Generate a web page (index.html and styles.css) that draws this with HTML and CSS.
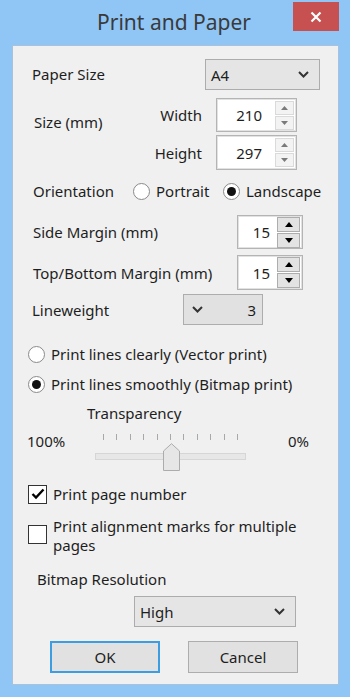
FILE: index.html
```html
<!DOCTYPE html>
<html>
<head>
<meta charset="utf-8">
<link rel="stylesheet" href="styles.css">
</head>
<body>
<div class="window">
  <div class="titlebar">
    <div class="title">Print and Paper</div>
    <div class="close">
      <svg width="12" height="12" viewBox="0 0 12 12"><path d="M1.5 1.5 L10.5 10.5 M10.5 1.5 L1.5 10.5" stroke="#fff" stroke-width="2.2" fill="none"/></svg>
    </div>
  </div>
  <div class="panel">
    <div class="row row-paper">
      <span class="label lbl-paper">Paper Size</span>
      <div class="combo combo-paper">
        <span>A4</span>
        <svg class="chev" width="11" height="7" viewBox="0 0 11 7"><path d="M1 1 L5.5 5.5 L10 1" stroke="#333" stroke-width="2" fill="none"/></svg>
      </div>
    </div>

    <div class="size-grid">
      <span class="label size-label">Size (mm)</span>
      <span class="sublabel">Width</span>
      <div class="spin spin-dim">
        <span class="num">210</span>
        <div class="btns">
          <div class="btn"><svg width="7" height="4" viewBox="0 0 7 4"><path d="M0 4 L3.5 0 L7 4Z" fill="#7a7a7a"/></svg></div>
          <div class="btn"><svg width="7" height="4" viewBox="0 0 7 4"><path d="M0 0 L3.5 4 L7 0Z" fill="#7a7a7a"/></svg></div>
        </div>
      </div>
      <span class="sublabel">Height</span>
      <div class="spin spin-dim spin-h">
        <span class="num">297</span>
        <div class="btns">
          <div class="btn"><svg width="7" height="4" viewBox="0 0 7 4"><path d="M0 4 L3.5 0 L7 4Z" fill="#7a7a7a"/></svg></div>
          <div class="btn"><svg width="7" height="4" viewBox="0 0 7 4"><path d="M0 0 L3.5 4 L7 0Z" fill="#7a7a7a"/></svg></div>
        </div>
      </div>
    </div>

    <div class="row row-orient">
      <span class="label lbl-orient">Orientation</span>
      <span class="radio"></span><span class="rtext rt-portrait">Portrait</span>
      <span class="radio checked"></span><span class="rtext">Landscape</span>
    </div>

    <div class="row row-margin">
      <span class="label lbl-margin">Side Margin (mm)</span>
      <div class="spin spin-m">
        <span class="num">15</span>
        <div class="btns">
          <div class="btn"><svg width="8" height="5" viewBox="0 0 8 5"><path d="M0 5 L4 0 L8 5Z" fill="#000"/></svg></div>
          <div class="btn"><svg width="8" height="5" viewBox="0 0 8 5"><path d="M0 0 L4 5 L8 0Z" fill="#000"/></svg></div>
        </div>
      </div>
    </div>

    <div class="row row-margin2">
      <span class="label lbl-margin">Top/Bottom Margin (mm)</span>
      <div class="spin spin-m">
        <span class="num">15</span>
        <div class="btns">
          <div class="btn"><svg width="8" height="5" viewBox="0 0 8 5"><path d="M0 5 L4 0 L8 5Z" fill="#000"/></svg></div>
          <div class="btn"><svg width="8" height="5" viewBox="0 0 8 5"><path d="M0 0 L4 5 L8 0Z" fill="#000"/></svg></div>
        </div>
      </div>
    </div>

    <div class="row row-line">
      <span class="label lbl-line">Lineweight</span>
      <div class="lw-box">
        <svg class="chev" width="11" height="7" viewBox="0 0 11 7"><path d="M1 1 L5.5 5.5 L10 1" stroke="#333" stroke-width="2" fill="none"/></svg>
        <span>3</span>
      </div>
    </div>

    <div class="row row-r1">
      <span class="radio"></span><span class="rtext">Print lines clearly (Vector print)</span>
    </div>
    <div class="row row-r2">
      <span class="radio checked"></span><span class="rtext">Print lines smoothly (Bitmap print)</span>
    </div>

    <div class="row row-transp"><span class="label">Transparency</span></div>

    <div class="row row-slider">
      <span class="pct pct-l">100%</span>
      <div class="slider">
        <div class="ticks">
          <i></i><i></i><i></i><i></i><i></i><i></i><i></i><i></i><i></i><i></i><i></i>
        </div>
        <div class="track"></div>
        <svg class="thumb" width="17" height="28" viewBox="0 0 17 28"><path d="M0.5 27.5 L0.5 8 L8.5 0.7 L16.5 8 L16.5 27.5 Z" fill="#e6e6e6" stroke="#acacac" stroke-width="1"/></svg>
      </div>
      <span class="pct pct-r">0%</span>
    </div>

    <div class="row row-c1">
      <span class="check checked">
        <svg width="14" height="12" viewBox="0 0 14 12"><path d="M1.5 6 L5 9.5 L12.5 1.5" stroke="#000" stroke-width="2.4" fill="none"/></svg>
      </span>
      <span class="rtext">Print page number</span>
    </div>

    <div class="row row-c2">
      <span class="check"></span>
      <span class="rtext ctext2">Print alignment marks for multiple pages</span>
    </div>

    <div class="row row-bitmap"><span class="label">Bitmap Resolution</span></div>

    <div class="row row-high">
      <div class="combo combo-high">
        <span>High</span>
        <svg class="chev" width="11" height="7" viewBox="0 0 11 7"><path d="M1 1 L5.5 5.5 L10 1" stroke="#333" stroke-width="2" fill="none"/></svg>
      </div>
    </div>

    <div class="row row-buttons">
      <div class="button default">OK</div>
      <div class="button">Cancel</div>
    </div>
  </div>
</div>
</body>
</html>
```
FILE: styles.css
```css
* { box-sizing: border-box; }
html, body { margin: 0; padding: 0; }
body {
  width: 350px;
  height: 697px;
  overflow: hidden;
  font-family: "Noto Sans", "Open Sans", sans-serif;
  font-size: 15px;
  color: #1e1e1e;
}
.window {
  width: 350px;
  height: 697px;
  background: #90c6f6;
  display: flex;
  flex-direction: column;
}
.titlebar {
  height: 45px;
  position: relative;
  display: flex;
  justify-content: center;
}
.title {
  font-size: 21px;
  color: #3a3a3a;
  line-height: 24px;
  padding-top: 10px;
  margin-left: -2px;
}
.close {
  position: absolute;
  left: 293px;
  top: 2px;
  width: 46px;
  height: 29px;
  background: #c75050;
  display: flex;
  align-items: center;
  justify-content: center;
}
.panel {
  margin-left: 12px;
  width: 327px;
  height: 640px;
  background: #f0f0f0;
  border: 1px solid #a9c2da;
  padding-top: 13px;
}
.row {
  display: flex;
  align-items: center;
}
.label { line-height: 18px; white-space: nowrap; }

.row-paper { height: 31px; padding-left: 19px; }
.lbl-paper { width: 173px; margin-top: -2px; }
.combo {
  height: 31px;
  background: #e5e5e5;
  border: 1px solid #acacac;
  display: flex;
  align-items: center;
  justify-content: space-between;
  padding: 0 10px 0 5px;
}
.combo-paper { width: 115px; }
.combo .chev, .lw-box .chev { display: block; }

.size-grid {
  margin-top: 8px;
  padding-left: 21px;
  display: grid;
  grid-template-columns: 116px 66px 81px;
  grid-template-rows: 34px 35px;
  row-gap: 3px;
  align-items: center;
}
.size-label { grid-row: 1 / span 2; align-self: start; padding-top: 15px; }
.sublabel { text-align: right; padding-right: 14px; line-height: 18px; }
.spin {
  height: 34px;
  width: 81px;
  background: #fff;
  border: 1px solid #b4b4b4;
  box-shadow: inset 0 0 0 1px #e2e2e2;
  display: flex;
  align-items: center;
  justify-content: flex-end;
  padding-right: 2px;
}
.spin-h { height: 35px; }
.num { margin-right: 13px; font-size: 15px; }
.btns { display: flex; flex-direction: column; gap: 1px; }
.btn {
  width: 19px;
  height: 14px;
  background: #f3f3f3;
  border: 1px solid #dadada;
  display: flex;
  align-items: center;
  justify-content: center;
}
.spin-m { width: 66px; height: 34px; padding-right: 2px; }
.spin-m .num { margin-right: 7px; }
.spin-m .btn { width: 23px; height: 15px; background: #e3e3e3; border: 1px solid #adadad; }

.row-orient { margin-top: 11px; height: 20px; padding-left: 20px; }
.lbl-orient { width: 100px; }
.radio {
  width: 17px;
  height: 17px;
  border-radius: 50%;
  background: #fff;
  border: 1px solid #8a8a8a;
  display: flex;
  align-items: center;
  justify-content: center;
  flex: none;
}
.radio.checked::after {
  content: "";
  width: 9px;
  height: 9px;
  border-radius: 50%;
  background: #111;
}
.rtext { margin-left: 6px; line-height: 18px; white-space: nowrap; }
.rt-portrait { width: 67px; }

.row-margin { margin-top: 14px; height: 34px; padding-left: 20px; }
.row-margin2 { margin-top: 6px; height: 35px; padding-left: 20px; }
.row-margin2 .spin-m { height: 35px; }
.lbl-margin { width: 204px; }

.row-line { margin-top: 4px; height: 31px; padding-left: 19px; }
.lbl-line { width: 151px; }
.lw-box {
  width: 80px;
  height: 31px;
  background: #e1e1e1;
  border: 1px solid #adadad;
  display: flex;
  align-items: center;
  justify-content: space-between;
  padding: 0 6px 0 8px;
}

.row-r1 { margin-top: 20px; height: 18px; padding-left: 15px; }
.row-r2 { margin-top: 12px; height: 18px; padding-left: 15px; }

.row-transp { margin-top: 11px; height: 18px; padding-left: 74px; }

.row-slider { margin-top: 8px; height: 42px; padding-left: 14px; align-items: flex-start; }
.pct { line-height: 18px; margin-top: 2px; }
.pct-l { width: 68px; }
.pct-r { margin-left: 42px; }
.slider { width: 151px; height: 42px; position: relative; }
.ticks {
  margin-top: 4px;
  margin-left: 8px;
  width: 135px;
  height: 6px;
  display: flex;
  justify-content: space-between;
}
.ticks i { display: block; width: 1px; height: 6px; background: #a8a8a8; }
.track {
  margin-top: 13px;
  height: 7px;
  background: #e7e7e7;
  border: 1px solid #d6d6d6;
}
.thumb { position: absolute; left: 68px; top: 13px; }

.row-c1 { margin-top: 13px; height: 18px; padding-left: 15px; }
.check {
  width: 19px;
  height: 19px;
  background: #fff;
  border: 1px solid #333;
  display: flex;
  align-items: center;
  justify-content: center;
  flex: none;
}
.row-c2 { margin-top: 14px; padding-left: 15px; align-items: flex-start; }
.row-c2 .check { margin-top: 8px; }
.ctext2 { white-space: normal; width: 250px; line-height: 19px; }

.row-bitmap { margin-top: 15px; height: 18px; padding-left: 24px; }
.row-high { margin-top: 8px; padding-left: 121px; }
.combo-high { width: 162px; }

.row-buttons { margin-top: 14px; padding-left: 37px; gap: 28px; }
.button {
  width: 110px;
  height: 32px;
  background: #e1e1e1;
  border: 1px solid #adadad;
  display: flex;
  align-items: center;
  justify-content: center;
}
.button.default { border: 2px solid #3c9de0; }
```
